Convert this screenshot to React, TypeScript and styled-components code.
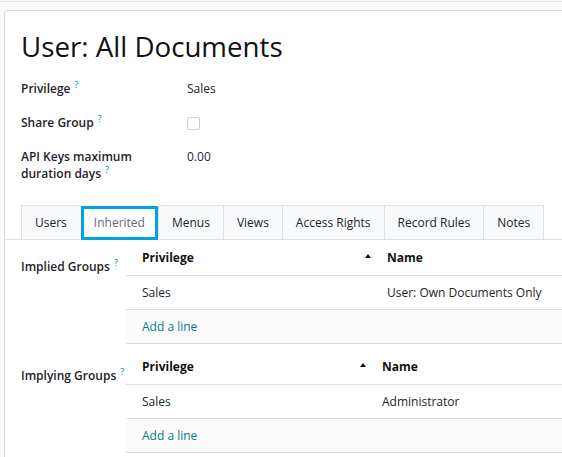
import * as React from 'react';
import styled, { createGlobalStyle } from 'styled-components';

const GlobalStyle = createGlobalStyle`
	html, body {
		margin: 0;
		background: #f8f9fa;
		overflow: hidden;
	}
	body {
		padding-top: 1px;
		font-family: "Open Sans", "Noto Sans", sans-serif;
		font-size: 12px;
		line-height: 17px;
		color: #212529;
	}
`;

const Page = styled.div`
	display: flex;
	flex-direction: column;
	box-sizing: border-box;
	height: calc(100vh - 1px);
	border-top: 1px solid #e0e2e5;
	padding: 8px 0 0 4px;
	overflow: hidden;
`;

const Sheet = styled.div`
	flex: 1;
	background: #fff;
	border: 1px solid #d8dadd;
	border-bottom: none;
	border-radius: 4px 0 0 0;
	margin-right: -10px;
`;

const Header = styled.div`
	padding: 18px 16px 0;
`;

const Title = styled.h1`
	margin: 0;
	font-size: 27.7px;
	line-height: 34px;
	font-weight: 400;
	color: #111;
`;

const FieldGrid = styled.div`
	display: grid;
	grid-template-columns: 166px 1fr;
	row-gap: 17px;
	margin-top: 17px;
`;

const FieldLabel = styled.div`
	font-weight: 600;
	padding-right: 16px;
	color: #1f2328;
`;

const FieldValue = styled.div`
	color: #212529;
`;

const Help = styled.sup`
	font-size: 9px;
	line-height: 0;
	margin-left: 4px;
	font-weight: 400;
	color: #0b86a8;
`;

const Checkbox = styled.span`
	display: inline-block;
	width: 11px;
	height: 11px;
	margin-top: 3px;
	border: 1px solid #cfd2d6;
	border-radius: 1px;
	vertical-align: top;
`;

const TabBar = styled.div`
	display: flex;
	padding: 0 16px;
	margin-top: 23px;
	border-bottom: 1px solid #dee2e6;
`;

const Tab = styled.div<{ $active?: boolean }>`
	padding: 8px 13px;
	border: 1px solid #dee2e6;
	border-bottom: none;
	margin-left: -1px;
	white-space: nowrap;
	background: ${(p) => (p.$active ? '#fff' : '#f8f9fa')};
	color: ${(p) => (p.$active ? '#6f6488' : '#212529')};
	${(p) =>
		p.$active &&
		`
		border-color: transparent;
		margin-bottom: -1px;
		padding-bottom: 9px;
		box-shadow: inset 0 0 0 3px #00a3e0;
	`}
	&:first-child {
		margin-left: 0;
	}
`;

const TabContent = styled.div`
	padding: 2px 0 0 16px;
`;

const GroupRow = styled.div`
	display: grid;
	grid-template-columns: 105px 1fr;
	margin-bottom: 7px;
`;

const GroupLabel = styled.div`
	font-weight: 600;
	padding-top: 16px;
	color: #1f2328;
`;

const TableRow = styled.div<{ $col: number; $head?: boolean; $muted?: boolean }>`
	display: grid;
	grid-template-columns: ${(p) => p.$col}px 1fr;
	padding: ${(p) => (p.$head ? '7px 0 9px' : '8px 0')};
	border-bottom: 1px solid #dcdfe3;
	background: ${(p) => (p.$muted ? '#fbfbfb' : '#fff')};
	font-weight: ${(p) => (p.$head ? 700 : 400)};
	color: ${(p) => (p.$head ? '#111' : '#212529')};
`;

const Cell = styled.div`
	padding: 0 16px;
	white-space: nowrap;
`;

const SortCell = styled.div`
	display: flex;
	justify-content: space-between;
	padding-left: 16px;
`;

const SortCaret = styled.span`
	align-self: flex-start;
	margin-top: 5px;
	width: 0;
	height: 0;
	border-left: 3.5px solid transparent;
	border-right: 3.5px solid transparent;
	border-bottom: 4px solid #111;
`;

const AddLine = styled.span`
	color: #017e84;
`;

interface GroupTableProps {
	label: string;
	col: number;
	name: string;
}

const GroupTable = ({ label, col, name }: GroupTableProps) => (
	<GroupRow>
		<GroupLabel>
			{label}
			<Help>?</Help>
		</GroupLabel>
		<div>
			<TableRow $col={col} $head>
				<SortCell>
					Privilege
					<SortCaret />
				</SortCell>
				<Cell>Name</Cell>
			</TableRow>
			<TableRow $col={col}>
				<Cell>Sales</Cell>
				<Cell>{name}</Cell>
			</TableRow>
			<TableRow $col={col} $muted>
				<Cell>
					<AddLine>Add a line</AddLine>
				</Cell>
			</TableRow>
		</div>
	</GroupRow>
);

const tabs = ['Users', 'Inherited', 'Menus', 'Views', 'Access Rights', 'Record Rules', 'Notes'];

export default function App() {
	return (
		<>
			<GlobalStyle />
			<Page>
				<Sheet>
					<Header>
						<Title>User: All Documents</Title>
						<FieldGrid>
							<FieldLabel>
								Privilege<Help>?</Help>
							</FieldLabel>
							<FieldValue>Sales</FieldValue>
							<FieldLabel>
								Share Group<Help>?</Help>
							</FieldLabel>
							<FieldValue>
								<Checkbox />
							</FieldValue>
							<FieldLabel>
								API Keys maximum duration days<Help>?</Help>
							</FieldLabel>
							<FieldValue>0.00</FieldValue>
						</FieldGrid>
					</Header>
					<TabBar>
						{tabs.map((t) => (
							<Tab key={t} $active={t === 'Inherited'}>
								{t}
							</Tab>
						))}
					</TabBar>
					<TabContent>
						<GroupTable label="Implied Groups" col={245} name="User: Own Documents Only" />
						<GroupTable label="Implying Groups" col={240} name="Administrator" />
					</TabContent>
				</Sheet>
			</Page>
		</>
	);
}
